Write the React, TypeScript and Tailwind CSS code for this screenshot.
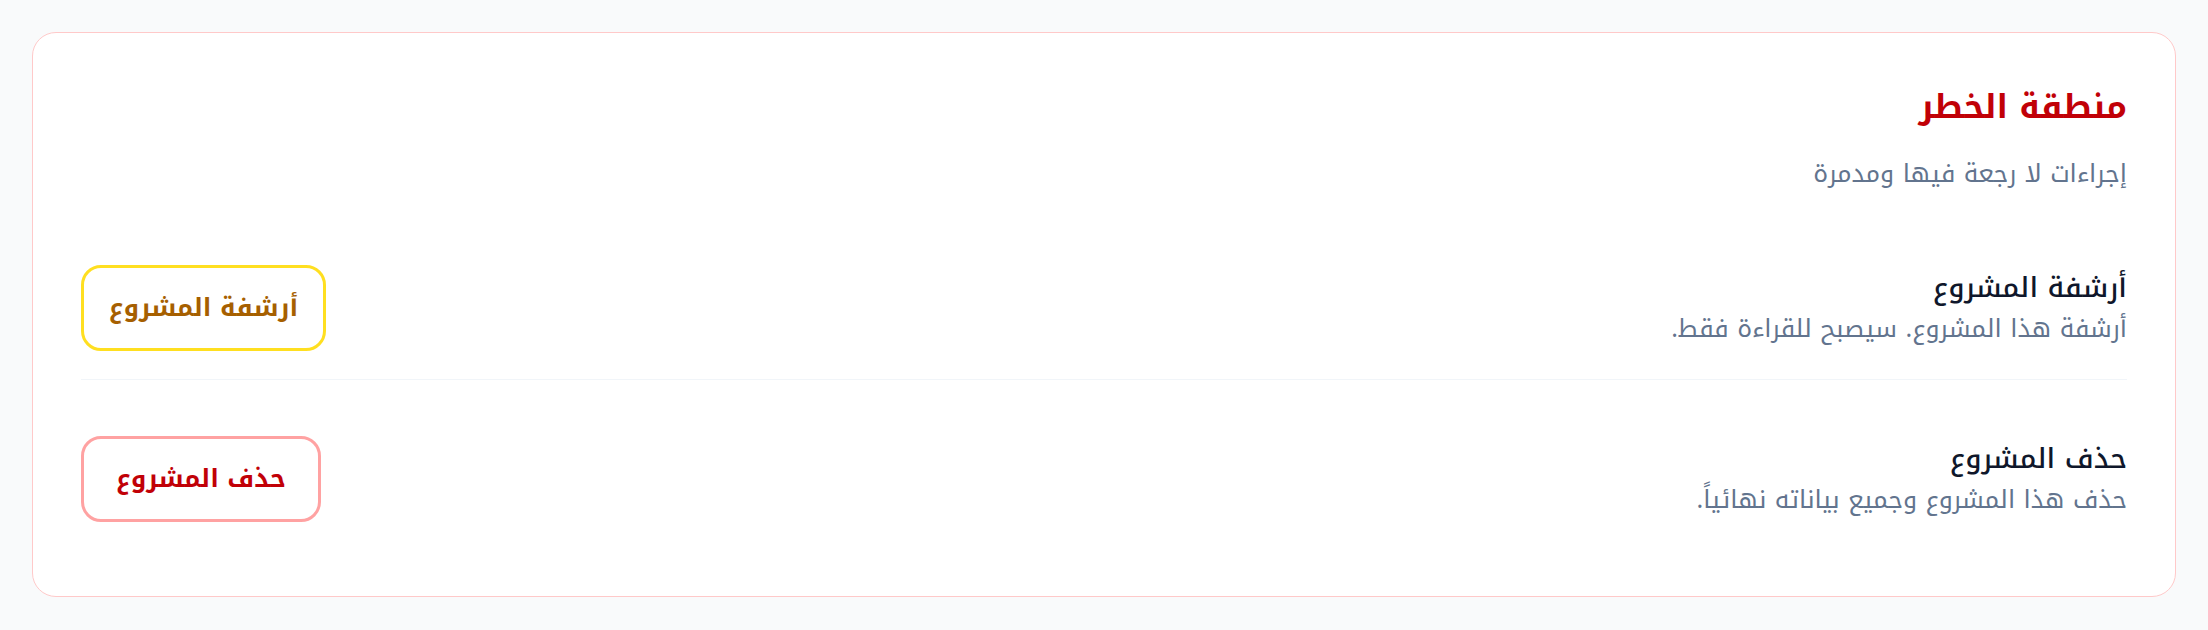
import React from 'react';

const DangerZone = () => {
  const actions = [
    {
      title: 'أرشفة المشروع',
      description: 'أرشفة هذا المشروع. سيصبح للقراءة فقط.',
      button: 'أرشفة المشروع',
      tone: 'w-[245px] border-yellow-300 text-yellow-700',
    },
    {
      title: 'حذف المشروع',
      description: 'حذف هذا المشروع وجميع بياناته نهائياً.',
      button: 'حذف المشروع',
      tone: 'w-[240px] border-red-300 text-red-700',
    },
  ];

  return (
    <div className="min-h-screen bg-gray-50 p-8 font-['Noto_Kufi_Arabic','Noto_Sans',sans-serif]">
      <section dir="rtl" className="bg-white border-[1.5px] border-red-200 rounded-[24px] px-12 pt-12 pb-[46px]">
        <div className="mt-1 mb-11">
          <h2 className="text-[33px] leading-[44px] font-bold text-red-700">منطقة الخطر</h2>
          <p className="text-[25px] leading-[38px] text-slate-500 mt-[26px]">إجراءات لا رجعة فيها ومدمرة</p>
        </div>

        <div className="flex flex-col gap-7">
          {actions.map((action, index) => (
            <div
              key={index}
              className={`flex items-center justify-between py-7 ${
                index === 0 ? 'border-b border-slate-100' : ''
              }`}
            >
              <div>
                <h3 className="text-[28px] leading-[41px] font-medium text-slate-900">{action.title}</h3>
                <p className="text-[25px] leading-[41px] text-slate-500">{action.description}</p>
              </div>
              <button
                className={`flex justify-center bg-white border-[3px] rounded-[20px] py-[22px] text-[25px] leading-9 font-bold ${action.tone}`}
              >
                {action.button}
              </button>
            </div>
          ))}
        </div>
      </section>
    </div>
  );
};

export default function App() {
  return <DangerZone />;
}
